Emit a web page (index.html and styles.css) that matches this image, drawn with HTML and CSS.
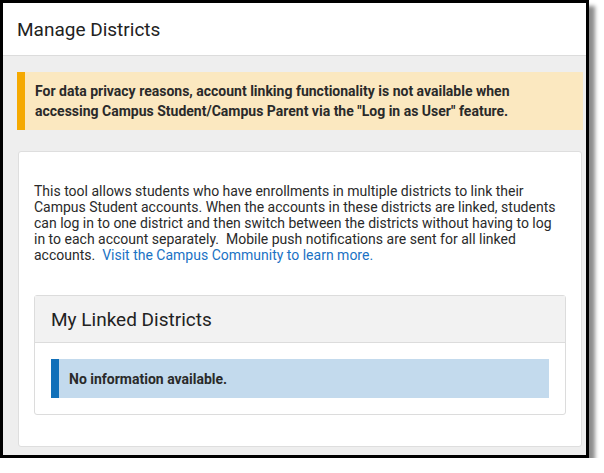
FILE: index.html
```html
<!DOCTYPE html>
<html lang="en">
<head>
    <meta charset="UTF-8">
    <meta name="viewport" content="width=device-width, initial-scale=1.0">
    <title>Manage Districts</title>
    <link rel="stylesheet" href="styles.css">
</head>
<body>
    <div class="frame">
        <div class="page-header">
            <h1>Manage Districts</h1>
        </div>
        <div class="page-body">
            <div class="alert alert-warning">
                For data privacy reasons, account linking functionality is not available when
                accessing Campus Student/Campus Parent via the "Log in as User" feature.
            </div>
            <div class="card">
                <p class="intro">
                    This tool allows students who have enrollments in multiple districts to link their
                    Campus Student accounts. When the accounts in these districts are linked, students
                    can log in to one district and then switch between the districts without having to log
                    in to each account separately.&nbsp; Mobile push notifications are sent for all linked
                    accounts.&nbsp; <a href="#">Visit the Campus Community to learn more.</a>
                </p>
                <div class="panel">
                    <div class="panel-header">
                        <h2>My Linked Districts</h2>
                    </div>
                    <div class="panel-body">
                        <div class="alert alert-info">No information available.</div>
                    </div>
                </div>
            </div>
        </div>
    </div>
</body>
</html>
```

FILE: styles.css
```css
body{
    margin: 0;
    background: #fff;
    font-family: Roboto, "Liberation Sans", sans-serif;
    color: #222;
}
.frame{
    width: 583px;
    height: 452px;
    border: 3px solid #000;
    box-shadow: 6px 6px 4px rgba(0, 0, 0, 0.45);
    overflow: hidden;
    display: flex;
    flex-direction: column;
}
.page-header{
    height: 52px;
    background: #fff;
    border-bottom: 1px solid #dcdcdc;
    padding-left: 14px;
    display: flex;
    align-items: center;
    flex-shrink: 0;
}
.page-header h1{
    margin: 0;
    font-size: 19px;
    font-weight: 400;
    color: #222;
}
.page-body{
    flex: 1;
    background: #eeeeee;
    padding: 16px 3px 8px 14px;
}
.alert{
    font-size: 14px;
    font-weight: 700;
    color: #2a2a2a;
}
.alert-warning{
    background: #fbe8c0;
    border-left: 8px solid #f5a900;
    padding: 9px 10px 9px 10px;
    line-height: 20px;
}
.card{
    margin: 21px 1px 0 1px;
    height: 294px;
    background: #fff;
    border: 1px solid #dedede;
    border-radius: 3px;
    padding: 0 15px;
}
.intro{
    margin: 31px 0 32px 0;
    font-size: 14px;
    line-height: 16px;
    color: #2a2a2a;
}
.intro a{
    display: inline-block;
    color: #1a72c4;
    text-decoration: none;
}
.panel{
    border: 1px solid #dcdcdc;
    border-radius: 3px;
}
.panel-header{
    height: 46px;
    background: #f2f2f2;
    border-bottom: 1px solid #dcdcdc;
    padding-left: 16px;
    display: flex;
    align-items: center;
}
.panel-header h2{
    margin: 0;
    font-size: 19px;
    font-weight: 400;
    color: #222;
}
.panel-body{
    padding: 16px;
}
.alert-info{
    background: #c3daed;
    border-left: 8px solid #1170b9;
    padding: 0 10px;
    height: 39px;
    display: flex;
    align-items: center;
}
```
